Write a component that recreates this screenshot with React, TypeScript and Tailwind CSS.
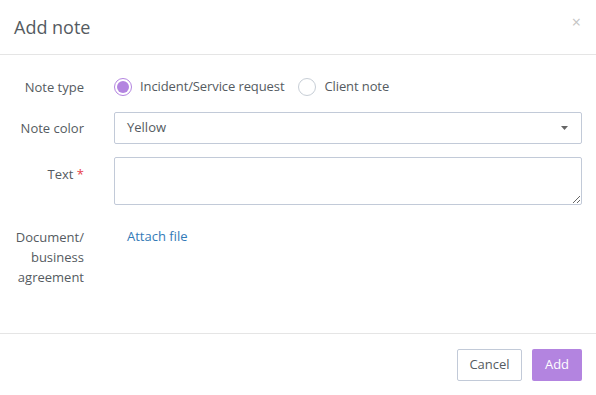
import React from "react";

const Label: React.FC<{ children: React.ReactNode; className?: string }> = ({
  children,
  className = "",
}) => (
  <div className={`w-[84px] shrink-0 text-right text-[13px] leading-[20px] text-[#555b61] ${className}`}>
    {children}
  </div>
);

const Radio: React.FC<{ checked?: boolean; label: string }> = ({ checked, label }) => (
  <label className="flex items-center gap-[8px] cursor-pointer">
    <span
      className={`flex h-[18px] w-[18px] items-center justify-center rounded-full border ${
        checked ? "border-[#b384e0]" : "border-[#c7ced6]"
      } bg-white`}
    >
      {checked && <span className="h-[12px] w-[12px] rounded-full bg-[#b384e0]" />}
    </span>
    <span className="text-[13px] text-[#555b61] tracking-[-0.1px]">{label}</span>
  </label>
);

export default function App() {
  return (
    <div
      className="h-[395px] w-[596px] bg-white rounded-[3px] flex flex-col overflow-hidden"
      style={{ fontFamily: '"Open Sans", "Liberation Sans", sans-serif' }}
    >
      {/* Header */}
      <div className="h-[55px] shrink-0 flex items-center justify-between border-b border-[#e5e5e5] pl-[14px] pr-[15px]">
        <div className="text-[18px] text-[#555b61]">Add note</div>
        <button className="text-[16px] leading-none text-[#c4c4c4] -mt-[10px]">×</button>
      </div>

      {/* Body */}
      <div className="flex-1 flex flex-col pt-[22px] pr-[14px]">
        <div className="flex items-center h-[20px]">
          <Label>Note type</Label>
          <div className="ml-[30px] flex items-center gap-[14px]">
            <Radio checked label="Incident/Service request" />
            <Radio label="Client note" />
          </div>
        </div>

        <div className="flex items-center mt-[15px]">
          <Label>Note color</Label>
          <div className="ml-[30px] flex-1 h-[32px] border border-[#c2cad8] rounded-[2px] flex items-center justify-between pl-[12px] pr-[13px]">
            <span className="text-[13px] text-[#555b61]">Yellow</span>
            <svg width="7" height="4" viewBox="0 0 7 4">
              <path d="M0 0 L7 0 L3.5 4 Z" fill="#666" />
            </svg>
          </div>
        </div>

        <div className="flex items-start mt-[13px]">
          <Label className="pt-[7px]">
            Text <span className="text-[#e73d4a]">*</span>
          </Label>
          <textarea className="ml-[30px] flex-1 h-[48px] border border-[#c2cad8] rounded-[2px] outline-none" />
        </div>

        <div className="flex items-start mt-[22px]">
          <Label>
            Document/
            <br />
            business
            <br />
            agreement
          </Label>
          <a className="ml-[43px] text-[13px] leading-[20px] text-[#337ab7] -mt-[1px] cursor-pointer">
            Attach file
          </a>
        </div>
      </div>

      {/* Footer */}
      <div className="h-[62px] shrink-0 border-t border-[#e5e5e5] flex items-start justify-end gap-[10px] pt-[15px] pr-[14px]">
        <button className="h-[32px] w-[65px] border border-[#c2cad8] rounded-[2px] bg-white text-[13px] text-[#555b61]">
          Cancel
        </button>
        <button className="h-[32px] w-[50px] rounded-[2px] bg-[#b384e0] text-[13px] text-white">
          Add
        </button>
      </div>
    </div>
  );
}
